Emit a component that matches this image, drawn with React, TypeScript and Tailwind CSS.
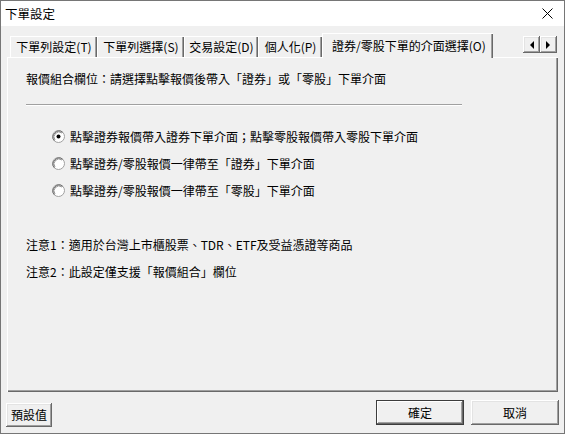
import React from 'react';

const bevel =
  'shadow-[inset_-1px_-1px_#696969,inset_1px_1px_#ffffff,inset_-2px_-2px_#a0a0a0,inset_2px_2px_#e3e3e3]';

const tabs = [
  { label: '下單列設定(T)', w: 'w-[87px]' },
  { label: '下單列選擇(S)', w: 'w-[87px]' },
  { label: '交易設定(D)', w: 'w-[74px]' },
  { label: '個人化(P)', w: 'w-[64px]' },
];

const Radio: React.FC<{ checked?: boolean }> = ({ checked }) => (
  <svg width="13" height="13" viewBox="0 0 13 13" className="shrink-0">
    <circle cx="6.5" cy="6.5" r="6" fill="#ffffff" stroke="#a0a0a0" />
    <path d="M2.3 10.7 A6 6 0 0 1 10.7 2.3" fill="none" stroke="#696969" />
    <path d="M3 10 A5 5 0 0 1 10 3" fill="none" stroke="#505050" strokeWidth="0.6" />
    {checked && <circle cx="6.5" cy="6.5" r="2" fill="#000000" />}
  </svg>
);

const Arrow: React.FC<{ dir: 'left' | 'right' }> = ({ dir }) => (
  <div className={`w-[17px] h-[17px] flex items-center justify-center bg-[#f0f0f0] ${bevel}`}>
    <svg width="5" height="8" viewBox="0 0 5 8">
      {dir === 'left' ? <path d="M5 0 L5 8 L1 4 Z" fill="#000" /> : <path d="M0 0 L0 8 L4 4 Z" fill="#000" />}
    </svg>
  </div>
);

const options = [
  { text: '點擊證券報價帶入證券下單介面；點擊零股報價帶入零股下單介面', checked: true },
  { text: '點擊證券/零股報價一律帶至「證券」下單介面', checked: false },
  { text: '點擊證券/零股報價一律帶至「零股」下單介面', checked: false },
];

export default function App() {
  return (
    <div
      className="w-[565px] h-[434px] flex flex-col bg-[#f0f0f0] border border-[#767676] text-[12px] leading-[16px] text-black"
      style={{ fontFamily: '"Noto Sans CJK TC", "Noto Sans", sans-serif' }}
    >
      {/* title bar */}
      <div className="h-[25px] bg-white flex items-center pl-[4px] pr-[11px] shrink-0">
        <span className="text-[12.5px]">下單設定</span>
        <svg className="ml-auto" width="11" height="11" viewBox="0 0 11 11">
          <path d="M0.5 0.5 L10.5 10.5 M10.5 0.5 L0.5 10.5" stroke="#000" strokeWidth="1" />
        </svg>
      </div>

      {/* tab strip */}
      <div className="h-[31px] flex items-end pl-[9px] pr-[7px] shrink-0">
        {tabs.map((t) => (
          <div
            key={t.label}
            className={`${t.w} h-[21px] flex items-center justify-center border-t border-l border-white shadow-[inset_-1px_0_#696969,inset_-2px_0_#a0a0a0] whitespace-nowrap`}
          >
            {t.label}
          </div>
        ))}
        <div className="relative z-10 w-[171px] h-[25px] -mb-[1px] flex items-start pt-[4px] pl-[9px] border-t border-l border-white shadow-[inset_-1px_0_#696969,inset_-2px_0_#a0a0a0] bg-[#f0f0f0] whitespace-nowrap">
          證券/零股下單的介面選擇(O)
        </div>
        <div className="ml-auto self-start mt-[10px] flex">
          <Arrow dir="left" />
          <Arrow dir="right" />
        </div>
      </div>

      {/* panel */}
      <div className="mx-[6px] h-[335px] shrink-0 flex flex-col pl-[18px] pt-[13px] border-t border-l border-white shadow-[inset_-1px_-1px_#696969,inset_-2px_-2px_#a0a0a0]">
        <div className="whitespace-nowrap">報價組合欄位：請選擇點擊報價後帶入「證券」或「零股」下單介面</div>
        <div className="mt-[17px] w-[436px] h-[2px] border-t border-[#a0a0a0] border-b border-b-white" />
        <div className="mt-[17px] flex flex-col">
          {options.map((o) => (
            <div key={o.text} className="h-[27px] flex items-center pl-[26px] gap-[5px] whitespace-nowrap">
              <Radio checked={o.checked} />
              <span>{o.text}</span>
            </div>
          ))}
        </div>
        <div className="mt-[27px] h-[27px] flex items-center whitespace-nowrap">
          注意1：適用於台灣上市櫃股票、TDR、ETF及受益憑證等商品
        </div>
        <div className="h-[27px] flex items-center whitespace-nowrap">注意2：此設定僅支援「報價組合」欄位</div>
      </div>

      {/* buttons */}
      <div className="flex items-start pl-[5px] pr-[5px]">
        <button className={`mt-[11px] w-[46px] h-[24px] bg-[#f0f0f0] ${bevel}`}>預設值</button>
        <button
          className={`ml-auto mt-[8px] w-[88px] h-[25px] bg-[#f0f0f0] border border-[#3c3c3c] shadow-[inset_-1px_-1px_#696969,inset_1px_1px_#ffffff,inset_-2px_-2px_#a0a0a0]`}
        >
          確定
        </button>
        <button className={`ml-[7px] mt-[8px] w-[88px] h-[25px] bg-[#f0f0f0] ${bevel}`}>取消</button>
      </div>
    </div>
  );
}
